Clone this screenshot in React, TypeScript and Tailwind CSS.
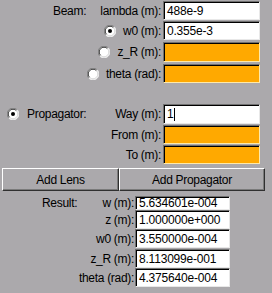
import React from "react";

const Radio = ({ checked }: { checked?: boolean }) => (
  <span className="relative inline-block w-[12px] h-[12px] shrink-0">
    <svg width="12" height="12" viewBox="0 0 12 12" className="absolute inset-0">
      <circle cx="6" cy="6" r="5.5" fill="#ffffff" />
      <path d="M1.8 10.2 A5.5 5.5 0 0 1 10.2 1.8" fill="none" stroke="#808080" strokeWidth="1" />
      <path d="M2.6 9.4 A4.5 4.5 0 0 1 9.4 2.6" fill="none" stroke="#303030" strokeWidth="1" />
      <path d="M10.2 1.8 A5.5 5.5 0 0 1 1.8 10.2" fill="none" stroke="#f4f4f4" strokeWidth="1" />
      <path d="M9.4 2.6 A4.5 4.5 0 0 1 2.6 9.4" fill="none" stroke="#d8d8d8" strokeWidth="1" />
      {checked && <circle cx="6" cy="6" r="2" fill="#000000" />}
    </svg>
  </span>
);

const Field = ({
  value,
  orange,
  className,
  cursor,
}: {
  value?: string;
  orange?: boolean;
  className?: string;
  cursor?: boolean;
}) => (
  <div
    className={
      "flex items-center pl-[2px] overflow-hidden border border-t-[#707070] border-l-[#707070] shadow-[inset_1px_1px_0_#000] " +
      (orange
        ? "bg-[#ffa900] border-b-[#ffe9a8] border-r-[#ffe9a8] "
        : "bg-white border-b-[#e8e8e8] border-r-[#e8e8e8] ") +
      (className ?? "")
    }
  >
    <span className="text-[12px] leading-none text-black tracking-[-0.2px] whitespace-nowrap pl-[1px]">{value}</span>
    {cursor && <span className="inline-block w-[1px] h-[13px] bg-black ml-[1px]" />}
  </div>
);

const Button = ({ label, className }: { label: string; className?: string }) => (
  <div
    className={
      "flex items-center justify-center h-[23px] border border-t-white border-l-white border-b-[#303030] border-r-[#303030] shadow-[inset_-1px_-1px_0_#7a7a7a] bg-[#aba9ac] " +
      (className ?? "")
    }
  >
    <span className="text-[12px] leading-none tracking-[-0.3px] text-black">{label}</span>
  </div>
);

export default function App() {
  return (
    <div
      className="w-[272px] h-[293px] bg-[#aba9ac] overflow-hidden text-black text-[12px] leading-none tracking-[-0.3px]"
      style={{ fontFamily: '"Liberation Sans", Arial, sans-serif' }}
    >
      {/* Beam section */}
      <div className="pt-[1px] flex flex-col">
        <div className="flex items-center h-[19px]">
          <div className="w-[161px] flex items-center justify-between pl-[53px]">
            <span>Beam:</span>
            <span>lambda (m):</span>
          </div>
          <Field value="488e-9" className="ml-[2px] w-[97px] h-full" />
        </div>
        <div className="flex items-center h-[19px] mt-[1px]">
          <div className="w-[161px] flex items-center justify-end gap-[7px]">
            <Radio checked />
            <span>w0 (m):</span>
          </div>
          <Field value="0.355e-3" className="ml-[2px] w-[97px] h-full" />
        </div>
        <div className="flex items-center h-[20px] mt-[2px]">
          <div className="w-[161px] flex items-center justify-end gap-[7px]">
            <Radio />
            <span>z_R (m):</span>
          </div>
          <Field orange className="ml-[2px] w-[97px] h-full" />
        </div>
        <div className="flex items-center h-[19px] mt-[2px]">
          <div className="w-[161px] flex items-center justify-end gap-[7px]">
            <Radio />
            <span>theta (rad):</span>
          </div>
          <Field orange className="ml-[2px] w-[97px] h-full" />
        </div>
      </div>

      {/* Propagator section */}
      <div className="mt-[21px] flex flex-col">
        <div className="flex items-center h-[20px]">
          <div className="w-[161px] flex items-center justify-between pl-[7px]">
            <div className="flex items-center gap-[8px]">
              <Radio checked />
              <span>Propagator:</span>
            </div>
            <span>Way (m):</span>
          </div>
          <Field value="1" cursor className="ml-[2px] w-[97px] h-full" />
        </div>
        <div className="flex items-center h-[19px] mt-[1px]">
          <div className="w-[161px] flex justify-end">
            <span>From (m):</span>
          </div>
          <Field orange className="ml-[2px] w-[97px] h-full" />
        </div>
        <div className="flex items-center h-[19px] mt-[1px]">
          <div className="w-[161px] flex justify-end">
            <span>To (m):</span>
          </div>
          <Field orange className="ml-[2px] w-[97px] h-full" />
        </div>
      </div>

      {/* Buttons */}
      <div className="mt-[4px] flex pl-[2px]">
        <Button label="Add Lens" className="w-[117px]" />
        <Button label="Add Propagator" className="w-[146px]" />
      </div>

      {/* Results */}
      <div className="mt-[5px] flex flex-col">
        <div className="flex items-center h-[14px]">
          <div className="w-[134px] flex items-center justify-between pl-[42px]">
            <span>Result:</span>
            <span>w (m):</span>
          </div>
          <Field value="5.634601e-004" className="ml-[1px] w-[95px] h-full" />
        </div>
        <div className="flex items-center h-[19px]">
          <div className="w-[134px] flex justify-end">
            <span>z (m):</span>
          </div>
          <Field value="1.000000e+000" className="ml-[1px] w-[95px] h-full" />
        </div>
        <div className="flex items-center h-[19px]">
          <div className="w-[134px] flex justify-end">
            <span>w0 (m):</span>
          </div>
          <Field value="3.550000e-004" className="ml-[1px] w-[95px] h-full" />
        </div>
        <div className="flex items-center h-[19px] mt-[1px]">
          <div className="w-[134px] flex justify-end">
            <span>z_R (m):</span>
          </div>
          <Field value="8.113099e-001" className="ml-[1px] w-[95px] h-full" />
        </div>
        <div className="flex items-center h-[19px]">
          <div className="w-[134px] flex justify-end">
            <span>theta (rad):</span>
          </div>
          <Field value="4.375640e-004" className="ml-[1px] w-[95px] h-full" />
        </div>
      </div>
    </div>
  );
}
